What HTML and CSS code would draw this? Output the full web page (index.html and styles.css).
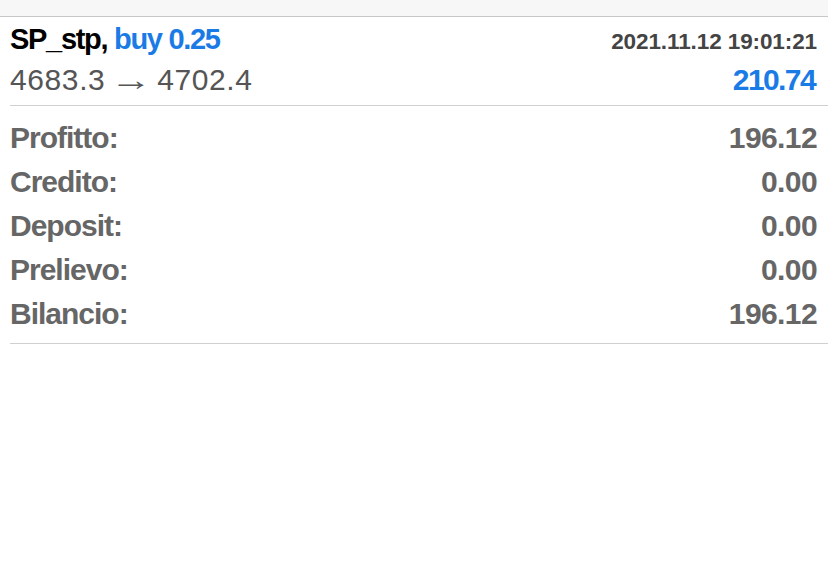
FILE: index.html
```html
<!DOCTYPE html>
<html>
<head>
<meta charset="utf-8">
<link rel="stylesheet" href="styles.css">
</head>
<body>
<div class="topbar"></div>
<div class="deal">
	<div class="deal_head">
		<div class="row">
			<div class="title">SP_stp, <span class="buy">buy 0.25</span></div>
			<div class="date">2021.11.12 19:01:21</div>
		</div>
		<div class="row row_prices">
			<div class="prices">4683.3 <span class="arrow">→</span> 4702.4</div>
			<div class="result">210.74</div>
		</div>
	</div>
	<div class="deal_body">
		<div class="row line"><span>Profitto:</span><span>196.12</span></div>
		<div class="row line"><span>Credito:</span><span>0.00</span></div>
		<div class="row line"><span>Deposit:</span><span>0.00</span></div>
		<div class="row line"><span>Prelievo:</span><span>0.00</span></div>
		<div class="row line"><span>Bilancio:</span><span>196.12</span></div>
	</div>
</div>
</body>
</html>
```

FILE: styles.css
```css
body {
	margin: 0;
	padding: 0;
	background: #fff;
	font-family: "Liberation Sans", Arial, sans-serif;
}
.topbar {
	height: 16px;
	background: #f7f7f7;
	border-bottom: 1px solid #c8c8c8;
}
.deal {
	margin-left: 10px;
}
.row {
	display: flex;
	justify-content: space-between;
	align-items: baseline;
	padding-right: 11px;
}
.deal_head {
	padding-top: 4px;
	padding-bottom: 3px;
	border-bottom: 1px solid #d0d0d0;
}
.title {
	font-size: 29px;
	font-weight: bold;
	letter-spacing: -1.3px;
	color: #000;
	line-height: 36px;
}
.buy {
	color: #1a7be6;
}
.date {
	font-size: 22.5px;
	font-weight: bold;
	letter-spacing: -0.1px;
	color: #444;
}
.row_prices {
	line-height: 45px;
}
.prices {
	font-size: 30px;
	letter-spacing: 0.6px;
	word-spacing: -4px;
	color: #555;
}
.prices .arrow {
	display: inline-block;
	width: 30px;
	margin: 0 6px;
	text-align: center;
	letter-spacing: 0;
	transform: scaleX(1.4);
}
.result {
	font-size: 30px;
	font-weight: bold;
	letter-spacing: -1.6px;
	color: #1a7be6;
	margin-right: 2px;
}
.deal_body {
	padding-top: 10px;
	padding-bottom: 7px;
	border-bottom: 1px solid #d0d0d0;
}
.line {
	font-size: 30px;
	font-weight: bold;
	letter-spacing: -1px;
	color: #666;
	line-height: 44px;
}
.line span:last-child {
	letter-spacing: -0.6px;
}
```
